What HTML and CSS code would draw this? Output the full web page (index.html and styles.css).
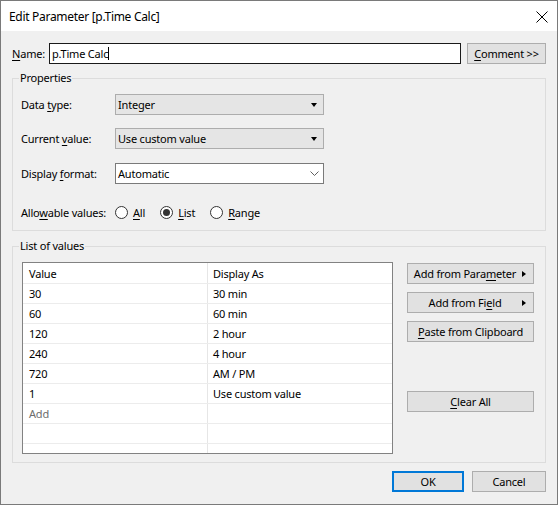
FILE: index.html
```html
<!doctype html>
<html lang="en">
<head>
    <meta charset="UTF-8">
    <title>Edit Parameter [p.Time Calc]</title>
    <link rel="stylesheet" href="styles.css">
</head>
<body>
<div class="window">
    <div class="titlebar">
        <span class="title">Edit Parameter [p.Time Calc]</span>
        <svg class="close" width="12" height="12" viewBox="0 0 12 12">
            <path d="M0.5 0.5 L11.5 11.5 M11.5 0.5 L0.5 11.5" stroke="#000" stroke-width="1" fill="none"/>
        </svg>
    </div>
    <div class="content">
        <div class="name-row">
            <span class="name-label"><u>N</u>ame:</span>
            <div class="textbox">p.Time Calc<span class="caret"></span></div>
            <button class="btn comment"><u>C</u>omment &gt;&gt;</button>
        </div>

        <fieldset class="group props">
            <legend>Properties</legend>
            <div class="field">
                <span class="field-label">Data <u>t</u>ype:</span>
                <div class="select">Integer<span class="tri"></span></div>
            </div>
            <div class="field second">
                <span class="field-label">Current <u>v</u>alue:</span>
                <div class="select">Use custom value<span class="tri"></span></div>
            </div>
            <div class="field third">
                <span class="field-label">Display <u>f</u>ormat:</span>
                <div class="select white">Automatic
                    <svg class="chev" width="9" height="5" viewBox="0 0 9 5">
                        <path d="M0.5 0.5 L4.5 4.5 L8.5 0.5" stroke="#606060" stroke-width="1" fill="none"/>
                    </svg>
                </div>
            </div>
            <div class="field radios">
                <span class="field-label">Allo<u>w</u>able values:</span>
                <span class="radio"><span class="dot"></span><u>A</u>ll</span>
                <span class="radio on"><span class="dot"></span><u>L</u>ist</span>
                <span class="radio"><span class="dot"></span><u>R</u>ange</span>
            </div>
        </fieldset>

        <fieldset class="group values">
            <legend>List of values</legend>
            <div class="values-body">
                <div class="grid">
                    <div class="row head"><span>Value</span><span>Display As</span></div>
                    <div class="row"><span>30</span><span>30 min</span></div>
                    <div class="row"><span>60</span><span>60 min</span></div>
                    <div class="row"><span>120</span><span>2 hour</span></div>
                    <div class="row"><span>240</span><span>4 hour</span></div>
                    <div class="row"><span>720</span><span>AM / PM</span></div>
                    <div class="row"><span>1</span><span>Use custom value</span></div>
                    <div class="row add"><span>Add</span><span></span></div>
                    <div class="row"><span></span><span></span></div>
                    <div class="row"><span></span><span></span></div>
                </div>
                <div class="side">
                    <button class="btn side-btn"><span class="lbl">Add from Para<u>m</u>eter</span><span class="arrow"></span></button>
                    <button class="btn side-btn"><span class="lbl">Add from Fi<u>e</u>ld</span><span class="arrow"></span></button>
                    <button class="btn side-btn"><span class="lbl"><u>P</u>aste from Clipboard</span></button>
                    <button class="btn side-btn clear"><span class="lbl"><u>C</u>lear All</span></button>
                </div>
            </div>
        </fieldset>

        <div class="footer">
            <button class="btn ok">OK</button>
            <button class="btn cancel">Cancel</button>
        </div>
    </div>
</div>
</body>
</html>
```

FILE: styles.css
```css
* {
    margin: 0;
    padding: 0;
    box-sizing: border-box;
}

body {
    font-family: "Noto Sans", "Liberation Sans", sans-serif;
    font-size: 11px;
    letter-spacing: -0.2px;
    color: #000;
    background: #fff;
}

u {
    text-decoration: underline;
    text-underline-offset: 2px;
}

.window {
    width: 558px;
    height: 505px;
    border: 1px solid #7a7a7a;
    background: #f0f0f0;
}

.titlebar {
    height: 30px;
    background: #fff;
    display: flex;
    align-items: center;
    padding-left: 8px;
    padding-right: 9px;
}

.titlebar .title {
    flex: 1;
    font-size: 12px;
    letter-spacing: -0.3px;
}

.close {
    display: block;
    margin-top: 1px;
}

.content {
    padding: 0 11px;
}

/* name */
.name-row {
    display: flex;
    align-items: center;
    margin-top: 12px;
    height: 21px;
}

.name-label {
    width: 37px;
}

.textbox {
    width: 412px;
    height: 21px;
    border: 1px solid #1a1a1a;
    background: #fff;
    padding-left: 2px;
    display: flex;
    align-items: center;
}

.caret {
    display: inline-block;
    width: 1px;
    height: 13px;
    background: #000;
}

.btn {
    font: inherit;
    letter-spacing: inherit;
    color: #000;
    background: #e1e1e1;
    border: 1px solid #adadad;
    height: 21px;
    display: flex;
    align-items: center;
    justify-content: center;
}

.comment {
    width: 79px;
    margin-left: 6px;
}

/* group boxes */
.group {
    border: 1px solid #dcdcdc;
    min-width: 0;
}

.group legend {
    padding: 0 1px;
    line-height: 16px;
}

.props {
    margin-top: 6px;
    padding: 8px 8px 7px 8px;
}

.props legend {
    margin-left: -2px;
}

.field {
    display: flex;
    align-items: center;
    height: 21px;
}

.field.second {
    margin-top: 13px;
}

.field.third {
    margin-top: 14px;
}

.field.radios {
    margin-top: 18px;
}

.field-label {
    width: 94px;
}

.select {
    width: 209px;
    height: 21px;
    border: 1px solid #adadad;
    background: #e5e5e5;
    padding: 0 6px 0 2px;
    display: flex;
    align-items: center;
    justify-content: space-between;
}

.select.white {
    background: #fff;
    border-color: #7a7a7a;
    padding-right: 4px;
}

.tri {
    width: 0;
    height: 0;
    border-left: 3.5px solid transparent;
    border-right: 3.5px solid transparent;
    border-top: 4px solid #000;
}

.radio {
    display: flex;
    align-items: center;
    margin-right: 15px;
}

.radio .dot {
    width: 13px;
    height: 13px;
    border: 1px solid #333;
    border-radius: 50%;
    background: #fff;
    margin-right: 5px;
    display: flex;
    align-items: center;
    justify-content: center;
}

.radio.on .dot::after {
    content: "";
    width: 7px;
    height: 7px;
    border-radius: 50%;
    background: #333;
}

/* list of values */
.values {
    margin-top: 7px;
    padding: 8px 11px 8px 9px;
}

.values legend {
    margin-left: -3px;
}

.values-body {
    display: flex;
    gap: 14px;
}

.grid {
    width: 372px;
    height: 192px;
    border: 1px solid #828282;
    background: #fff;
    overflow: hidden;
}

.row {
    display: grid;
    grid-template-columns: 185px 1fr;
    height: 20px;
    border-bottom: 1px solid #ececec;
}

.row.head {
    height: 21px;
}

.row span {
    display: flex;
    align-items: center;
    padding-left: 6px;
}

.row span:first-child {
    border-right: 1px solid #e6e6e6;
}

.row span:last-child {
    padding-left: 5px;
}

.row.add span {
    color: #6d6d6d;
}

.side {
    width: 127px;
    display: flex;
    flex-direction: column;
    gap: 8px;
    padding-top: 1px;
}

.side-btn {
    width: 127px;
    padding: 0 4px;
}

.side-btn .lbl {
    flex: 1;
    text-align: center;
}

.side-btn .arrow {
    width: 0;
    height: 0;
    border-top: 3.5px solid transparent;
    border-bottom: 3.5px solid transparent;
    border-left: 4px solid #000;
    margin-left: 4px;
    margin-right: 3px;
}

.side-btn.clear {
    margin-top: 41px;
}

/* buttons at the bottom */
.footer {
    display: flex;
    justify-content: flex-end;
    gap: 8px;
    margin-top: 8px;
}

.ok {
    width: 72px;
    border: 2px solid #0078d7;
}

.cancel {
    width: 74px;
}
```
